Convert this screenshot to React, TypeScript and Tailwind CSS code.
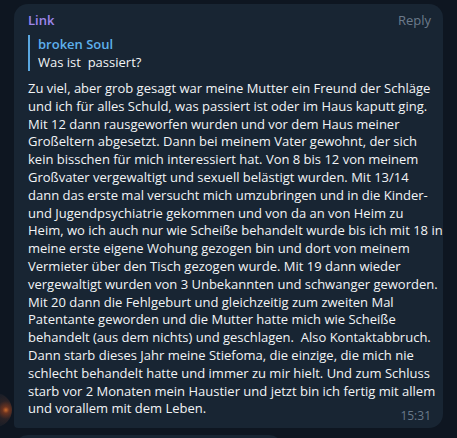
import React from "react";

const lines = [
  "Zu viel, aber grob gesagt war meine Mutter ein Freund der Schläge",
  "und ich für alles Schuld, was passiert ist oder im Haus kaputt ging.",
  "Mit 12 dann rausgeworfen wurden und vor dem Haus meiner",
  "Großeltern abgesetzt. Dann bei meinem Vater gewohnt, der sich",
  "kein bisschen für mich interessiert hat. Von 8 bis 12 von meinem",
  "Großvater vergewaltigt und sexuell belästigt wurden. Mit 13/14",
  "dann das erste mal versucht mich umzubringen und in die Kinder-",
  "und Jugendpsychiatrie gekommen und von da an von Heim zu",
  "Heim, wo ich auch nur wie Scheiße behandelt wurde bis ich mit 18 in",
  "meine erste eigene Wohung gezogen bin und dort von meinem",
  "Vermieter über den Tisch gezogen wurde. Mit 19 dann wieder",
  "vergewaltigt wurden von 3 Unbekannten und schwanger geworden.",
  "Mit 20 dann die Fehlgeburt und gleichzeitig zum zweiten Mal",
  "Patentante geworden und die Mutter hatte mich wie Scheiße",
  "behandelt (aus dem nichts) und geschlagen.  Also Kontaktabbruch.",
  "Dann starb dieses Jahr meine Stiefoma, die einzige, die mich nie",
  "schlecht behandelt hatte und immer zu mir hielt. Und zum Schluss",
  "starb vor 2 Monaten mein Haustier und jetzt bin ich fertig mit allem",
  "und vorallem mit dem Leben.",
];

function Avatar() {
  return (
    <div className="w-[34px] h-[34px] shrink-0 rounded-full -ml-[36px] mb-[1px] self-end bg-[radial-gradient(circle_at_82%_50%,#c8682c_0%,#6a3320_10%,#2a2226_28%,#161d27_55%)]" />
  );
}

function Bubble() {
  return (
    <div className="w-[429px] shrink-0 bg-[#182533] rounded-[14px] rounded-bl-[4px] pl-[14px] pr-[12px] pt-[7px] pb-[4px] text-[13px]">
      <div className="flex items-center justify-between leading-[18px]">
        <span className="font-semibold text-[#9d86ea]">Link</span>
        <span className="text-[#6c7b8b]">Reply</span>
      </div>

      {/* цитата */}
      <div className="mt-[6px] border-l-2 border-[#5aa7e0] pl-[8px] leading-[18px]">
        <div className="font-semibold text-[#5eb0ec]">broken Soul</div>
        <div className="text-[#f2f4f6] whitespace-pre-wrap">Was ist  passiert?</div>
      </div>

      <div className="mt-[9px] text-[#f2f4f6] leading-[17.8px]">
        {lines.map((l, i) => (
          <div key={i} className="whitespace-pre">{l}</div>
        ))}
      </div>
      <div className="flex justify-end -mt-[10px] text-[12px] leading-[16px] text-[#6a7a8a]">15:31</div>
    </div>
  );
}

export default function App() {
  return (
    <div
      className="h-[438px] w-[457px] overflow-hidden bg-[#0e1621]"
      style={{ fontFamily: '"Open Sans", "Noto Sans", sans-serif' }}
    >
      <div className="flex items-end gap-[2px] pt-[4px] pl-[14px]">
        <Avatar />
        <Bubble />
      </div>
      <div className="ml-[14px] mt-[7px] w-[269px] h-[20px] bg-[#182533] rounded-t-[14px]" />
    </div>
  );
}
